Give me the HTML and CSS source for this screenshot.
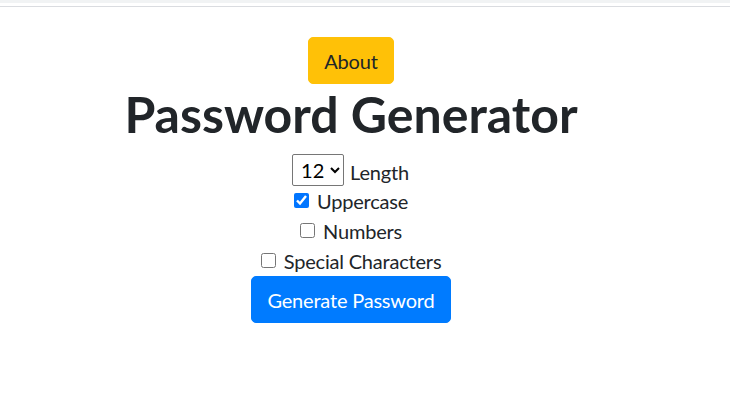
FILE: index.html
```html
<!DOCTYPE html>
<html lang="en">
<head>
<meta charset="utf-8">
<title>Password Generator</title>
<link rel="stylesheet" href="styles.css">
</head>
<body>
<div class="chrome"><div class="chrome-band"></div><div class="chrome-line"></div></div>
<main class="page">
  <button class="btn btn-warning" type="button">About</button>
  <h1 class="title">Password Generator</h1>
  <form class="options">
    <div class="row row-length">
      <select class="length">
        <option>8</option>
        <option selected>12</option>
        <option>16</option>
        <option>20</option>
      </select>
      <label class="length-label">Length</label>
    </div>
    <div class="row"><input type="checkbox" class="check" checked> <label>Uppercase</label></div>
    <div class="row"><input type="checkbox" class="check"> <label>Numbers</label></div>
    <div class="row"><input type="checkbox" class="check"> <label>Special Characters</label></div>
    <div class="row"><button class="btn btn-primary" type="button">Generate Password</button></div>
  </form>
</main>
</body>
</html>
```
FILE: styles.css
```css
html, body {
  margin: 0;
  padding: 0;
  background: #fff;
}
body {
  font-family: Lato, "Open Sans", sans-serif;
  font-size: 20px;
  line-height: 30px;
  color: #212529;
}
.chrome {
  height: 7px;
  display: flex;
  flex-direction: column;
}
.chrome-band {
  height: 3px;
  background: #f1f3f4;
}
.chrome-line {
  margin-top: 3px;
  height: 1px;
  background: #dadce0;
}
.page {
  width: 702px;
  padding-top: 30px;
  text-align: center;
}
.btn {
  display: inline-block;
  font-family: inherit;
  font-size: 20px;
  line-height: 30px;
  padding: 7.5px 15px;
  border: 1px solid transparent;
  border-radius: 5px;
  cursor: pointer;
  letter-spacing: -0.2px;
}
.btn-warning {
  background: #ffc107;
  border-color: #ffc107;
  color: #212529;
}
.btn-primary {
  background: #007bff;
  border-color: #007bff;
  color: #fff;
}
.title {
  margin: 0 0 10px;
  font-size: 50px;
  line-height: 60px;
  font-weight: 700;
}
.options {
  margin: 0;
}
.row {
  line-height: 30px;
}
.row-length {
  display: flex;
  justify-content: center;
  align-items: center;
  gap: 6px;
  height: 32px;
}
.length {
  box-sizing: border-box;
  font-family: inherit;
  font-size: 20px;
  width: 52px;
  height: 32px;
  margin: 0 0 0 -1px;
  padding: 0 0 0 4px;
  border: 1px solid #767676;
  border-radius: 2px;
  background: #fff;
  color: #000;
}
.length-label {
  margin-top: 3px;
}
.check {
  width: 15px;
  height: 15px;
  margin: 0 3px 0 0;
  vertical-align: 1px;
  accent-color: #0075ff;
}
label {
  letter-spacing: -0.2px;
}
```
